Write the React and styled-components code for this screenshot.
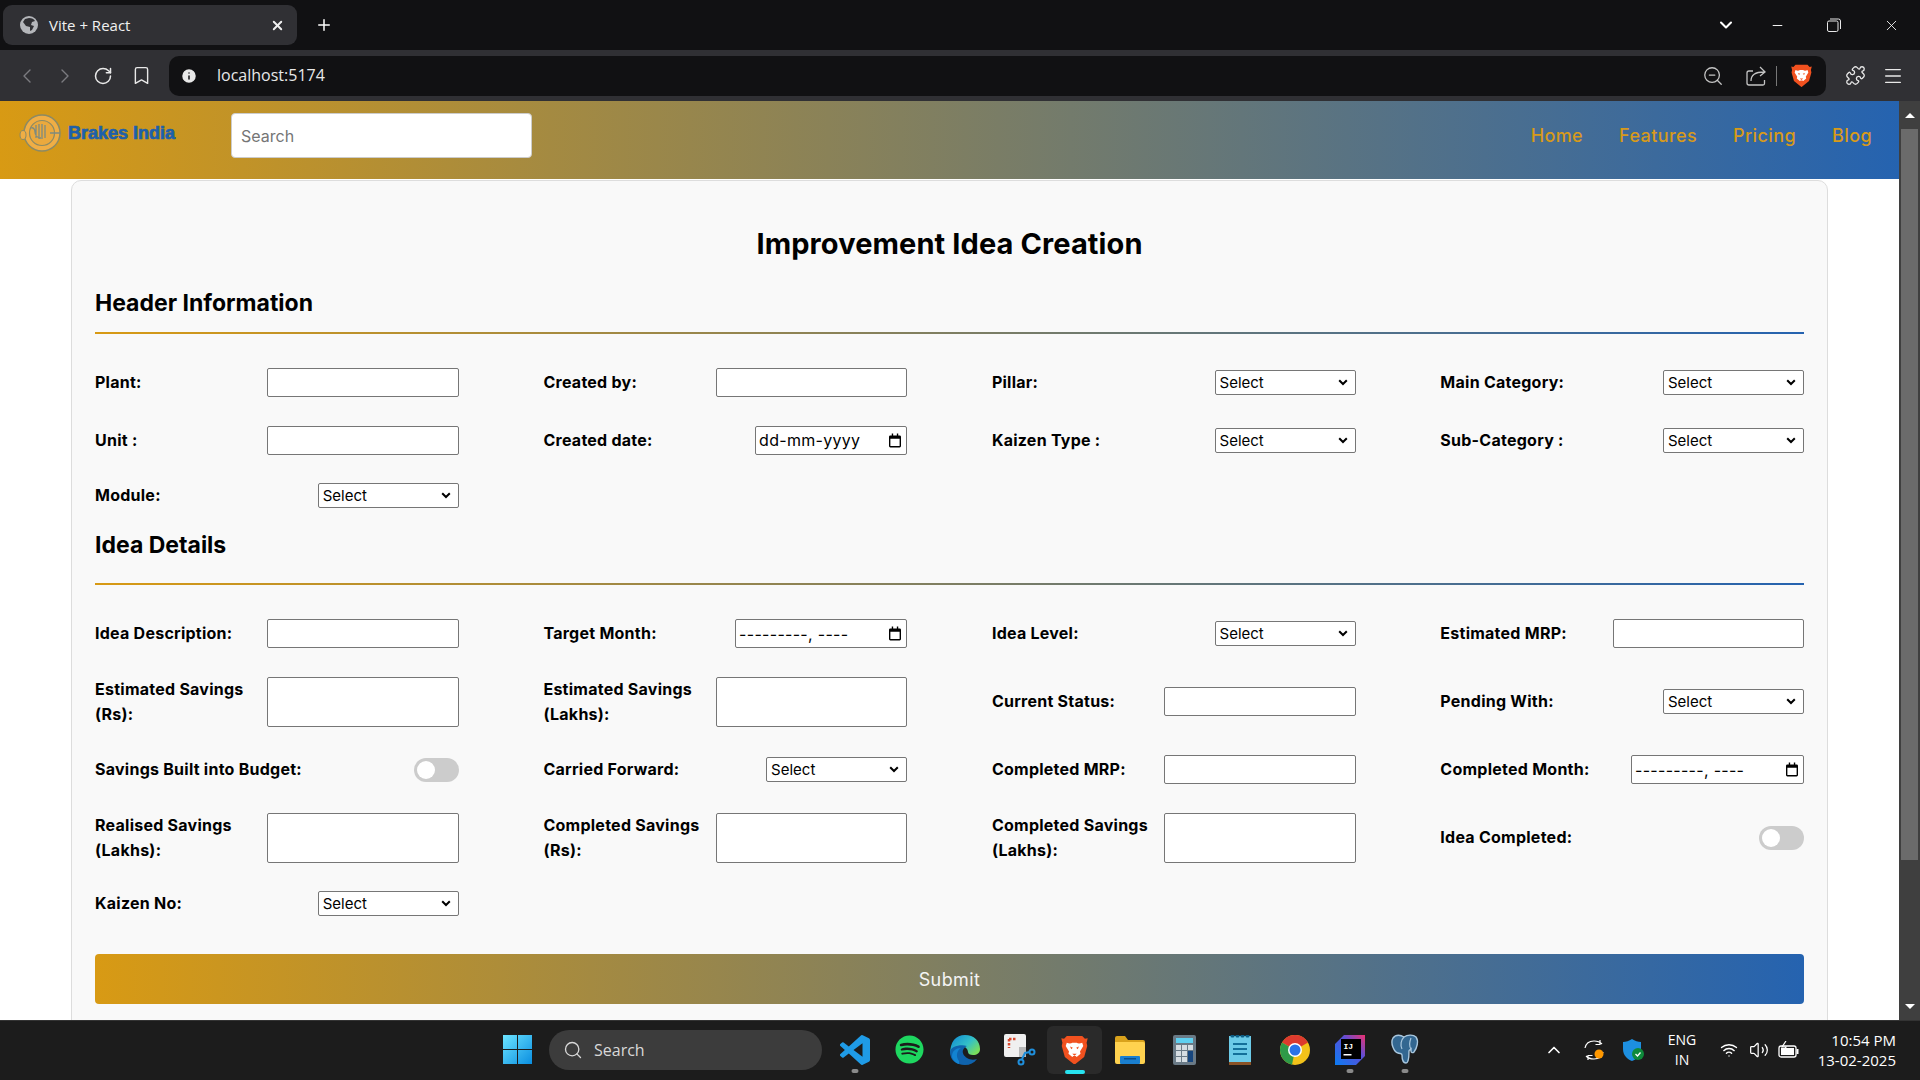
import React from "react";
import styled, { createGlobalStyle } from "styled-components";
import {
  ChevronDown,
  ChevronLeft,
  ChevronRight,
  ChevronUp,
  Bookmark,
  Info,
  Menu,
  Minus,
  Plus,
  Puzzle,
  RotateCw,
  Search as SearchIcon,
  Volume2,
  Wifi,
  X,
  ZoomOut,
} from "lucide-react";
import { FaSpotify } from "react-icons/fa";

const GRADIENT = "linear-gradient(to right, #d89a14, #2563b0)";

const SELECT_ARROW =
  "url(\"data:image/svg+xml,%3Csvg xmlns='http://www.w3.org/2000/svg' width='10' height='7' viewBox='0 0 10 7'%3E%3Cpath d='M1.200 1.200L5 5l3.800-3.800' fill='none' stroke='%23000' stroke-width='2'/%3E%3C/svg%3E\")";

const GlobalStyle = createGlobalStyle`
  html, body {
    margin: 0;
    height: 100%;
    overflow: hidden;
    background: #fff;
  }
  * {
    box-sizing: border-box;
  }
`;

const Screen = styled.div`
  width: 1920px;
  height: 1080px;
  display: flex;
  flex-direction: column;
  font-family: Inter, "Noto Sans", sans-serif;
`;

const TabStrip = styled.div`
  height: 50px;
  flex: none;
  display: flex;
  align-items: center;
  background: #111113;
  color: #fff;
  padding-left: 3px;
`;

const Tab = styled.div`
  width: 294px;
  height: 40px;
  display: flex;
  align-items: center;
  background: #303034;
  border-radius: 9px;
  padding: 0 12px 0 17px;
  font-family: "Open Sans", sans-serif;
  font-size: 15px;
  color: #f0f0f0;
  gap: 11px;
`;

const TabTitle = styled.span`
  flex: 1;
`;

const NewTab = styled.div`
  width: 48px;
  margin-left: 3px;
  display: flex;
  justify-content: center;
`;

const WindowControls = styled.div`
  margin-left: auto;
  display: flex;
  align-items: center;
`;

const WindowButton = styled.div`
  width: ${(p) => p.$w}px;
  display: flex;
  justify-content: center;
`;

const Toolbar = styled.div`
  height: 51px;
  flex: none;
  display: flex;
  align-items: center;
  background: #303034;
  padding-left: 8px;
  color: #e8e8e8;
`;

const ToolSlot = styled.div`
  width: 38px;
  display: flex;
  justify-content: center;
  color: ${(p) => (p.$dim ? "#7b7b80" : "#e8e8e8")};
`;

const UrlBar = styled.div`
  width: 1657px;
  height: 40px;
  margin-left: 9px;
  display: flex;
  align-items: center;
  background: #111113;
  border-radius: 10px;
  padding: 0 14px 0 11px;
  margin-right: 10px;
`;

const UrlText = styled.span`
  font-family: "Open Sans", sans-serif;
  font-size: 16px;
  color: #e8e8e8;
  margin: -2px 0 0 19px;
`;

const UrlActions = styled.div`
  margin-left: auto;
  display: flex;
  align-items: center;
  color: #c4c4c4;
`;

const Separator = styled.span`
  width: 1px;
  height: 20px;
  background: #777;
  margin: 0 14px 0 10px;
`;

const Viewport = styled.div`
  flex: 1;
  min-height: 0;
  display: flex;
`;

const Page = styled.div`
  flex: 1;
  min-width: 0;
  overflow: hidden;
  background: #fff;
`;

const Scrollbar = styled.div`
  width: 21px;
  flex: none;
  display: flex;
  flex-direction: column;
  align-items: center;
  background: #3f3f3f;
`;

const ScrollArrow = styled.div`
  height: 28px;
  flex: none;
  display: flex;
  align-items: center;
  justify-content: center;
  &::before {
    content: "";
    border-left: 5px solid transparent;
    border-right: 5px solid transparent;
    ${(p) => (p.$down ? "border-top" : "border-bottom")}: 5px solid #fff;
  }
`;

const ScrollThumb = styled.div`
  width: 17px;
  height: 731px;
  background: #6b6b6b;
`;

const ScrollTrack = styled.div`
  flex: 1;
`;

const Navbar = styled.nav`
  height: 78px;
  display: flex;
  align-items: center;
  padding: 0 27px 9px 19px;
  background: ${GRADIENT};
`;

const Brand = styled.div`
  width: 212px;
  display: flex;
  align-items: center;
  gap: 7px;
  margin-top: -1px;
  transform: translateY(-2px);
`;

const BrandName = styled.span`
  font-family: "Liberation Sans", sans-serif;
  font-size: 18px;
  font-weight: 700;
  color: #1e60aa;
  -webkit-text-stroke: 0.7px #1e60aa;
`;

const SearchBox = styled.input`
  width: 301px;
  height: 45px;
  border: 1px solid #ccc;
  border-radius: 4px;
  padding: 0 9px;
  background: #fff;
  font-family: Inter, sans-serif;
  font-size: 16px;
  &::placeholder {
    color: #757575;
    opacity: 1;
  }
`;

const NavLinks = styled.div`
  margin-left: auto;
  display: flex;
  gap: 36px;
`;

const NavLink = styled.a`
  font-size: 18px;
  font-weight: 500;
  color: #d89a1a;
  letter-spacing: 0.4px;
`;

const Card = styled.form`
  margin: 1px 71px 0;
  background: #f9f9f9;
  border: 1px solid #ddd;
  border-radius: 10px;
  padding: 42px 23px 40px;
`;

const Title = styled.h1`
  margin: 0;
  text-align: center;
  font-size: 29px;
  line-height: 42px;
  font-weight: 700;
  letter-spacing: 0.1px;
  color: #000;
`;

const SectionTitle = styled.h2`
  margin: ${(p) => p.$top}px 0 0;
  font-size: 23px;
  line-height: 35px;
  font-weight: 700;
  color: #000;
`;

const Divider = styled.div`
  height: 2px;
  margin: ${(p) => p.$top}px 0 34px;
  background: ${GRADIENT};
`;

const FieldGrid = styled.div`
  display: grid;
  grid-template-columns: repeat(4, 1fr);
  column-gap: 84.8px;
  row-gap: 28.5px;
`;

const Field = styled.div`
  display: flex;
  align-items: center;
  justify-content: space-between;
`;

const Label = styled.label`
  font-size: 16px;
  line-height: 24.5px;
  font-weight: 700;
  letter-spacing: 0.25px;
  color: #000;
`;

const TextInput = styled.input`
  width: 191.5px;
  height: ${(p) => (p.$tall ? 50 : 29)}px;
  flex: none;
  background: #fff;
  border: 1px solid #767676;
  border-radius: 2px;
  padding: 1px 2px;
`;

const Select = styled.select`
  width: 141px;
  height: 25px;
  flex: none;
  appearance: none;
  background: #fff ${SELECT_ARROW} no-repeat right 7px center;
  border: 1px solid #767676;
  border-radius: 2px;
  padding: 0 0 0 4px;
  font-family: Inter, sans-serif;
  font-size: 15px;
  color: #000;
`;

const DateBox = styled.div`
  width: ${(p) => p.$w}px;
  height: 29px;
  flex: none;
  display: flex;
  align-items: center;
  justify-content: space-between;
  background: #fff;
  border: 1px solid #767676;
  border-radius: 2px;
  padding: 0 5px 0 3px;
  font-size: 16px;
  letter-spacing: 0.3px;
  color: #000;
`;

const ToggleTrack = styled.span`
  width: 45px;
  height: 24px;
  flex: none;
  display: flex;
  align-items: center;
  padding-left: 3px;
  background: #ccc;
  border-radius: 12px;
  &::before {
    content: "";
    width: 18px;
    height: 18px;
    border-radius: 50%;
    background: #fff;
  }
`;

const Submit = styled.button`
  width: 100%;
  height: 50px;
  margin-top: 38px;
  border: none;
  border-radius: 4px;
  background: ${GRADIENT};
  color: #f4f4f4;
  font-family: Inter, sans-serif;
  font-size: 18px;
  font-weight: 400;
  letter-spacing: 0.4px;
`;

const Taskbar = styled.div`
  height: 60px;
  flex: none;
  display: flex;
  align-items: center;
  background: #1c1c1c;
  border-top: 1px solid #333;
  padding: 0 0 2px 503px;
  color: #fff;
`;

const TaskSearch = styled.div`
  width: 273px;
  height: 40px;
  margin: 0 5px 0 17px;
  display: flex;
  align-items: center;
  gap: 11px;
  padding-left: 14px;
  background: #3c3c3c;
  border-radius: 20px;
  font-family: "Open Sans", sans-serif;
  font-size: 16px;
  color: #d8d8d8;
`;

const TaskSlot = styled.div`
  position: relative;
  width: 55px;
  height: 48px;
  display: flex;
  align-items: center;
  justify-content: center;
  border-radius: 6px;
  background: ${(p) => (p.$active ? "#2a2a2a" : "transparent")};
  &::after {
    content: "";
    display: ${(p) => (p.$mark ? "block" : "none")};
    position: absolute;
    bottom: ${(p) => (p.$mark === "active" ? 0 : 1)}px;
    left: 50%;
    transform: translateX(-50%);
    width: ${(p) => (p.$mark === "active" ? 20 : 7)}px;
    height: 4px;
    border-radius: 2px;
    background: ${(p) => (p.$mark === "active" ? "#27e3f0" : "#8a8a8a")};
  }
`;

const Tray = styled.div`
  margin-left: auto;
  display: flex;
  align-items: center;
  padding-right: 24px;
  font-family: "Open Sans", sans-serif;
  font-size: 14px;
  line-height: 20px;
`;

const TrayItem = styled.div`
  width: ${(p) => p.$w}px;
  display: flex;
  justify-content: center;
`;

const Lang = styled.div`
  width: 56px;
  margin-right: 4px;
  text-align: center;
`;

const Clock = styled.div`
  width: 92px;
  text-align: right;
  font-size: 15px;
`;

const BraveLogo = ({ size = 24 }) => (
  <svg width={size} height={size * 1.1} viewBox="0 0 24 27">
    <path d="M5 1h14l2.500 2.500L24 3l-1 4 .6 3-2.800 10L12 27l-8.800-7L.4 10 1 7 0 3l2.500.5z" fill="#f1511f" />
    <path
      d="M5 7c2 1 4 1 5 0h4c1 1 3 1 5 0l1 3-3 5 .5 2-3.500 3-1-.8h-2l-1 .8-3.500-3 .5-2-3-5z"
      fill="#fff"
    />
    <path d="M8 10.500l2.500 1-1.500 1.500zM16 10.500l-2.500 1 1.500 1.500zM10 17h4l-2 1.800z" fill="#f1511f" />
  </svg>
);

const LogoMark = () => (
  <svg width="42" height="40" viewBox="0 0 42 40">
    <circle cx="23" cy="20" r="18" fill="#f0ae45" stroke="#8c8a64" strokeWidth="1.500" />
    <circle cx="23" cy="20" r="12.500" fill="#eba93d" stroke="#8c8a64" strokeWidth="1.200" />
    <path
      d="M17 12v13M20 11v15M23 11v15M26 12v13M12 15c2-1 4 1 4 4s2 6 6 6M31 20h10"
      stroke="#7d8a80"
      strokeWidth="1.300"
      fill="none"
    />
    <ellipse cx="4" cy="22" rx="3" ry="4.500" fill="#f0ae45" stroke="#8c8a64" />
  </svg>
);

const GlobeFilled = () => (
  <svg width="18" height="18" viewBox="0 0 18 18">
    <circle cx="9" cy="9" r="9" fill="#b4b6ba" />
    <path d="M9 2c3 0 5 1 6 3l-3 1-1 3 3 1-2 4-2 1 0-4-4-1-3-4 2-3z" fill="#303034" />
  </svg>
);

const ShareIcon = () => (
  <svg width="20" height="20" viewBox="0 0 20 20" fill="none" stroke="#c4c4c4" strokeWidth="1.300">
    <path d="M7 5H3a2 2 0 0 0-2 2v10a2 2 0 0 0 2 2h14a1.500 1.500 0 0 0 1.500-1.500V14" />
    <path d="M5 15c0-6 4-9 13-9M14 1l5 5-5 4" />
  </svg>
);

const RestoreIcon = () => (
  <svg width="14" height="14" viewBox="0 0 14 14" fill="none" stroke="#e8e8e8" strokeWidth="1">
    <rect x="0.500" y="3" width="10.500" height="10.500" rx="1.500" />
    <path d="M3 1h8.500A2 2 0 0 1 13.500 3v8" />
  </svg>
);

const CalendarIcon = () => (
  <svg width="12" height="15" viewBox="0 0 13 15">
    <path
      d="M3 0h1.500v2h4V0H10v2h1.500A1.500 1.500 0 0 1 13 3.500v10a1.500 1.500 0 0 1-1.500 1.500h-10A1.500 1.500 0 0 1 0 13.500v-10A1.500 1.500 0 0 1 1.500 2H3zM1.500 5.500v8h10v-8z"
      fill="#000"
    />
  </svg>
);

const WindowsLogo = () => (
  <svg width="29" height="29" viewBox="0 0 29 29">
    <defs>
      <linearGradient id="win" x1="0" y1="0" x2="1" y2="1">
        <stop offset="0" stopColor="#6ce4ff" />
        <stop offset="1" stopColor="#0a8ee0" />
      </linearGradient>
    </defs>
    <path d="M0 0h14v14H0zM15 0h14v14H15zM0 15h14v14H0zM15 15h14v14H15z" fill="url(#win)" />
  </svg>
);

const VsCodeIcon = () => (
  <svg width="30" height="30" viewBox="0 0 24 24">
    <path
      d="M23.150 2.587L18.210.21a1.494 1.494 0 0 0-1.705.29l-9.460 8.630-4.120-3.128a.999.999 0 0 0-1.276.057L.327 7.261A1 1 0 0 0 .326 8.740L3.899 12 .326 15.260a1 1 0 0 0 .001 1.479L1.650 17.940a.999.999 0 0 0 1.276.057l4.120-3.128 9.460 8.630a1.492 1.492 0 0 0 1.704.29l4.942-2.377A1.500 1.500 0 0 0 24 20.060V3.939a1.500 1.500 0 0 0-.850-1.352zm-5.146 14.861L10.826 12l7.178-5.448v10.896z"
      fill="#1f9be6"
    />
  </svg>
);

const EdgeIcon = () => (
  <svg width="30" height="30" viewBox="0 0 30 30">
    <defs>
      <linearGradient id="edgeTop" x1="0" y1="0" x2="1" y2="0.700">
        <stop offset="0" stopColor="#0e86d4" />
        <stop offset="0.600" stopColor="#33c0c8" />
        <stop offset="1" stopColor="#7ade5a" />
      </linearGradient>
    </defs>
    <path d="M15 0c9 0 15 6 15 14 0 4-3 6-7 6-3 0-5-1-5-3 0-3-3-6-7-6-5 0-10 3-11 9C0 6 6 0 15 0z" fill="url(#edgeTop)" />
    <path d="M0 17c0 8 6 13 15 13 5 0 9-2 12-6-3 1-7 1-10-1-3-2-5-5-4-8 1-2 2-3 4-4-7-2-17 1-17 6z" fill="#0f63ad" />
    <path d="M9 26c-3-4-3-10 2-13-5 0-9 3-9 8 0 3 3 7 7 8z" fill="#1283d2" />
  </svg>
);

const SnipIcon = () => (
  <svg width="32" height="32" viewBox="0 0 32 32">
    <rect x="0" y="0" width="22" height="23" rx="2" fill="#f0f0f0" />
    <path d="M5 5h8M5 5v9" stroke="#d9482c" strokeWidth="2.500" strokeDasharray="2.500 1.500" fill="none" />
    <rect x="15" y="13" width="7" height="10" fill="#b8b8b8" />
    <circle cx="28" cy="18" r="2.500" fill="none" stroke="#1f8fdc" strokeWidth="2" />
    <circle cx="17" cy="28" r="2.500" fill="none" stroke="#1f8fdc" strokeWidth="2" />
    <path d="M18 25l3-6 5-1" stroke="#1f8fdc" strokeWidth="2" fill="none" />
  </svg>
);

const FolderIcon = () => (
  <svg width="30" height="28" viewBox="0 0 30 28">
    <path d="M0 2a2 2 0 0 1 2-2h8l3 4h15a2 2 0 0 1 2 2v3H0z" fill="#d9a21c" />
    <path d="M0 6h28a2 2 0 0 1 2 2v18a2 2 0 0 1-2 2H2a2 2 0 0 1-2-2z" fill="#ffd24f" />
    <rect x="5" y="20" width="20" height="8" rx="1" fill="#1a7fd0" />
    <rect x="9" y="22" width="12" height="1.500" fill="#0b4f8c" />
  </svg>
);

const CalcIcon = () => (
  <svg width="23" height="30" viewBox="0 0 23 30">
    <rect width="23" height="30" rx="2" fill="#6a7a86" />
    <rect x="3" y="3" width="17" height="5" fill="#5fd0f0" />
    <path d="M3 10h5v5H3zM9 10h5v5H9zM15 10h5v5h-5zM3 16h5v5H3zM9 16h5v5H9zM3 22h5v5H3zM9 22h5v5H9z" fill="#d6dde2" />
    <rect x="15" y="16" width="5" height="11" fill="#17467e" />
  </svg>
);

const NotepadIcon = () => (
  <svg width="22" height="30" viewBox="0 0 22 30">
    <rect y="1" width="22" height="27" fill="#6ccbe8" />
    <rect y="27" width="22" height="3" fill="#8a5226" />
    <path d="M4 9h14M4 14h14M4 19h14" stroke="#14709a" strokeWidth="2" />
    <path d="M3 1h1M8 1h1M13 1h1M18 1h1" stroke="#0e5f86" strokeWidth="3" strokeLinecap="round" />
  </svg>
);

const ChromeIcon = () => (
  <svg width="30" height="30" viewBox="0 0 30 30">
    <circle cx="15" cy="15" r="15" fill="#f2c21a" />
    <path d="M15 15L2 7.500A15 15 0 0 1 28 7.500z" fill="#dd3a2e" />
    <path d="M15 15L2 7.500A15 15 0 0 0 12 29.700z" fill="#2e9a48" />
    <circle cx="15" cy="15" r="7" fill="#fff" />
    <circle cx="15" cy="15" r="5.500" fill="#2a73e8" />
  </svg>
);

const IdeaIcon = () => (
  <svg width="30" height="30" viewBox="0 0 30 30">
    <defs>
      <linearGradient id="ij" x1="0" y1="1" x2="1" y2="0">
        <stop offset="0" stopColor="#0a7cf2" />
        <stop offset="0.600" stopColor="#5a4fd8" />
        <stop offset="1" stopColor="#f0306e" />
      </linearGradient>
    </defs>
    <path d="M9 0h21v21l-9 9H0V9z" fill="url(#ij)" />
    <rect x="6" y="4" width="20" height="20" fill="#000" />
    <text x="8.500" y="14" fontSize="8" fontWeight="700" fill="#fff" fontFamily="Liberation Mono, monospace">
      IJ
    </text>
    <rect x="8.500" y="19" width="8" height="1.500" fill="#fff" />
  </svg>
);

const PostgresIcon = () => (
  <svg width="30" height="31" viewBox="0 0 30 31">
    <path
      d="M3 4c3-4 8-3 11-1 3-2 9-3 12 0 3 4 1 11-2 15-1 1-3 1-3-1v-2c-1 1-2 1-2 2 0 4 0 12-3 12s-4-3-4-8c0-2-2-1-4-2C4 18 0 9 3 4z"
      fill="#336791"
      stroke="#a9c7de"
      strokeWidth="1.400"
    />
    <path d="M14 3c-3 3-4 8-2 12M21 15c-2-3-2-6 0-11" fill="none" stroke="#a9c7de" strokeWidth="1.200" />
  </svg>
);

const SyncIcon = () => (
  <svg width="24" height="24" viewBox="0 0 24 24" fill="none">
    <path
      d="M3 10C4 5 8 3 12 3c3 0 6 1 8 3M18 2v4.500h-4.500M21 14c-1 5-5 7-9 7-3 0-6-1-8-3M6 22v-4.500h4.500"
      stroke="#fff"
      strokeWidth="1.200"
    />
    <circle cx="17" cy="16" r="4.500" fill="#ff9800" />
  </svg>
);

const ShieldIcon = () => (
  <svg width="24" height="24" viewBox="0 0 24 24">
    <path d="M10 1c3 2 6 3 9 3v7c0 6-4 10-9 12C5 21 1 17 1 11V4c3 0 6-1 9-3z" fill="#1d8fe0" />
    <circle cx="16" cy="16" r="6" fill="#0e8a3a" />
    <path d="M13.500 16l2 2 3-3.500" stroke="#fff" strokeWidth="1.300" fill="none" />
  </svg>
);

const BatteryIcon = () => (
  <svg width="22" height="18" viewBox="0 0 22 18" fill="none" stroke="#fff" strokeWidth="1.300">
    <rect x="1" y="5" width="17" height="11" rx="2" />
    <rect x="3" y="7" width="13" height="7" fill="#fff" stroke="none" />
    <path d="M19.500 8v5" strokeWidth="2" />
    <path d="M8 0L4 6h4l-2 4" strokeWidth="1.200" />
  </svg>
);

function TextField({ label, tall }) {
  return (
    <Field>
      <Label>{label}</Label>
      <TextInput type="text" $tall={tall} />
    </Field>
  );
}

function SelectField({ label }) {
  return (
    <Field>
      <Label>{label}</Label>
      <Select defaultValue="">
        <option value="">Select</option>
      </Select>
    </Field>
  );
}

function DateField({ label, width, value }) {
  return (
    <Field>
      <Label>{label}</Label>
      <DateBox $w={width}>
        <span>{value}</span>
        <CalendarIcon />
      </DateBox>
    </Field>
  );
}

function ToggleField({ label }) {
  return (
    <Field>
      <Label>{label}</Label>
      <ToggleTrack />
    </Field>
  );
}

export default function App() {
  const month = "---------, ----";
  return (
    <Screen>
      <GlobalStyle />
      <TabStrip>
        <Tab>
          <GlobeFilled />
          <TabTitle>Vite + React</TabTitle>
          <X size={15} strokeWidth={3} />
        </Tab>
        <NewTab>
          <Plus size={18} strokeWidth={2} />
        </NewTab>
        <WindowControls>
          <WindowButton $w={44}>
            <ChevronDown size={20} strokeWidth={2.5} />
          </WindowButton>
          <WindowButton $w={58}>
            <Minus size={15} strokeWidth={1.5} />
          </WindowButton>
          <WindowButton $w={56}>
            <RestoreIcon />
          </WindowButton>
          <WindowButton $w={58}>
            <X size={17} strokeWidth={1.2} />
          </WindowButton>
        </WindowControls>
      </TabStrip>

      <Toolbar>
        <ToolSlot $dim>
          <ChevronLeft size={24} strokeWidth={1.4} />
        </ToolSlot>
        <ToolSlot $dim>
          <ChevronRight size={24} strokeWidth={1.4} />
        </ToolSlot>
        <ToolSlot>
          <RotateCw size={20} strokeWidth={1.8} />
        </ToolSlot>
        <ToolSlot>
          <Bookmark size={21} strokeWidth={1.6} />
        </ToolSlot>
        <UrlBar>
          <Info size={18} fill="#e8e8e8" color="#111113" strokeWidth={2} />
          <UrlText>localhost:5174</UrlText>
          <UrlActions>
            <ZoomOut size={22} strokeWidth={1.4} style={{ marginRight: 22 }} />
            <ShareIcon />
            <Separator />
            <BraveLogo size={21} />
          </UrlActions>
        </UrlBar>
        <ToolSlot>
          <Puzzle size={21} strokeWidth={1.5} />
        </ToolSlot>
        <ToolSlot>
          <Menu size={22} strokeWidth={1.4} />
        </ToolSlot>
      </Toolbar>

      <Viewport>
        <Page>
          <Navbar>
            <Brand>
              <LogoMark />
              <BrandName>Brakes India</BrandName>
            </Brand>
            <SearchBox placeholder="Search" />
            <NavLinks>
              <NavLink>Home</NavLink>
              <NavLink>Features</NavLink>
              <NavLink>Pricing</NavLink>
              <NavLink>Blog</NavLink>
            </NavLinks>
          </Navbar>

          <Card>
            <Title>Improvement Idea Creation</Title>

            <SectionTitle $top={21}>Header Information</SectionTitle>
            <Divider $top={11} />
            <FieldGrid>
              <TextField label="Plant:" />
              <TextField label="Created by:" />
              <SelectField label="Pillar:" />
              <SelectField label="Main Category:" />
              <TextField label="Unit :" />
              <DateField label="Created date:" width={152} value="dd-mm-yyyy" />
              <SelectField label="Kaizen Type :" />
              <SelectField label="Sub-Category :" />
              <SelectField label="Module:" />
            </FieldGrid>

            <SectionTitle $top={20}>Idea Details</SectionTitle>
            <Divider $top={20} />
            <FieldGrid>
              <TextField label="Idea Description:" />
              <DateField label="Target Month:" width={172} value={month} />
              <SelectField label="Idea Level:" />
              <TextField label="Estimated MRP:" />
              <TextField
                tall
                label={
                  <>
                    Estimated Savings
                    <br />
                    (Rs):
                  </>
                }
              />
              <TextField
                tall
                label={
                  <>
                    Estimated Savings
                    <br />
                    (Lakhs):
                  </>
                }
              />
              <TextField label="Current Status:" />
              <SelectField label="Pending With:" />
              <ToggleField label="Savings Built into Budget:" />
              <SelectField label="Carried Forward:" />
              <TextField label="Completed MRP:" />
              <DateField label="Completed Month:" width={173} value={month} />
              <TextField
                tall
                label={
                  <>
                    Realised Savings
                    <br />
                    (Lakhs):
                  </>
                }
              />
              <TextField
                tall
                label={
                  <>
                    Completed Savings
                    <br />
                    (Rs):
                  </>
                }
              />
              <TextField
                tall
                label={
                  <>
                    Completed Savings
                    <br />
                    (Lakhs):
                  </>
                }
              />
              <ToggleField label="Idea Completed:" />
              <SelectField label="Kaizen No:" />
            </FieldGrid>

            <Submit type="button">Submit</Submit>
          </Card>
        </Page>
        <Scrollbar>
          <ScrollArrow />
          <ScrollThumb />
          <ScrollTrack />
          <ScrollArrow $down />
        </Scrollbar>
      </Viewport>

      <Taskbar>
        <WindowsLogo />
        <TaskSearch>
          <SearchIcon size={20} strokeWidth={1.6} />
          Search
        </TaskSearch>
        <TaskSlot $mark="dot">
          <VsCodeIcon />
        </TaskSlot>
        <TaskSlot>
          <FaSpotify size={29} color="#1ed760" />
        </TaskSlot>
        <TaskSlot>
          <EdgeIcon />
        </TaskSlot>
        <TaskSlot>
          <SnipIcon />
        </TaskSlot>
        <TaskSlot $active $mark="active">
          <BraveLogo size={27} />
        </TaskSlot>
        <TaskSlot>
          <FolderIcon />
        </TaskSlot>
        <TaskSlot>
          <CalcIcon />
        </TaskSlot>
        <TaskSlot>
          <NotepadIcon />
        </TaskSlot>
        <TaskSlot>
          <ChromeIcon />
        </TaskSlot>
        <TaskSlot $mark="dot">
          <IdeaIcon />
        </TaskSlot>
        <TaskSlot $mark="dot">
          <PostgresIcon />
        </TaskSlot>
        <Tray>
          <TrayItem $w={40}>
            <ChevronUp size={20} strokeWidth={2} />
          </TrayItem>
          <TrayItem $w={40}>
            <SyncIcon />
          </TrayItem>
          <TrayItem $w={40}>
            <ShieldIcon />
          </TrayItem>
          <Lang>
            ENG
            <br />
            IN
          </Lang>
          <TrayItem $w={30}>
            <Wifi size={18} strokeWidth={1.8} />
          </TrayItem>
          <TrayItem $w={30}>
            <Volume2 size={20} strokeWidth={1.5} />
          </TrayItem>
          <TrayItem $w={30}>
            <BatteryIcon />
          </TrayItem>
          <Clock>
            10:54 PM
            <br />
            13-02-2025
          </Clock>
        </Tray>
      </Taskbar>
    </Screen>
  );
}
